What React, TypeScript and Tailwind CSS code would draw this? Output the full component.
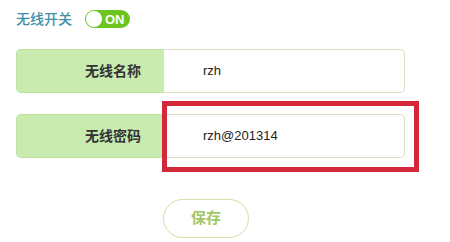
// Wireless settings form with a red annotation frame over the password field

const cjk = { fontFamily: '"Liberation Sans", "Noto Sans CJK SC", sans-serif' };

function Row({ label, value }: { label: string; value: string }) {
  return (
    <div className="flex h-[44px] w-[389px]">
      <div className="flex w-[148px] items-center justify-end rounded-l-[5px] border border-r-0 border-[#bde3a0] bg-[#c9ebb0] pr-[23px] text-[14px] font-semibold text-[#333]">
        {label}
      </div>
      <div className="flex flex-1 items-center rounded-r-[5px] border border-l-0 border-[#dcdfbf] bg-white pl-[39px] text-[13px] text-[#222]">
        {value}
      </div>
    </div>
  );
}

export default function App() {
  return (
    <div className="relative h-[242px] w-[450px] overflow-hidden bg-white" style={cjk}>
      <div className="px-4 pt-[10px]">
        {/* wireless switch */}
        <div className="flex h-[18px] items-center">
          <span className="text-[14px] font-medium text-[#3f8fa6]">无线开关</span>
          <div className="ml-[13px] flex h-[18px] w-[45px] items-center rounded-full bg-[#6cc61f] pl-[1px]">
            <div className="h-[16px] w-[16px] rounded-full bg-white" />
            <span className="ml-[3px] text-[13px] font-semibold leading-none text-white">ON</span>
          </div>
        </div>

        <div className="mt-[21px] flex flex-col gap-[21px]">
          <Row label="无线名称" value="rzh" />
          <Row label="无线密码" value="rzh@201314" />
        </div>

        <button className="ml-[147px] mt-[41px] flex h-[39px] w-[86px] items-center justify-center rounded-full border border-[#d8dca8] bg-white text-[15px] font-semibold text-[#a3c764]">
          保存
        </button>
      </div>

      {/* annotation frame */}
      <div className="absolute left-[162px] top-[101px] h-[71px] w-[257px] border-[5px] border-[#d3283a]" />
    </div>
  );
}
